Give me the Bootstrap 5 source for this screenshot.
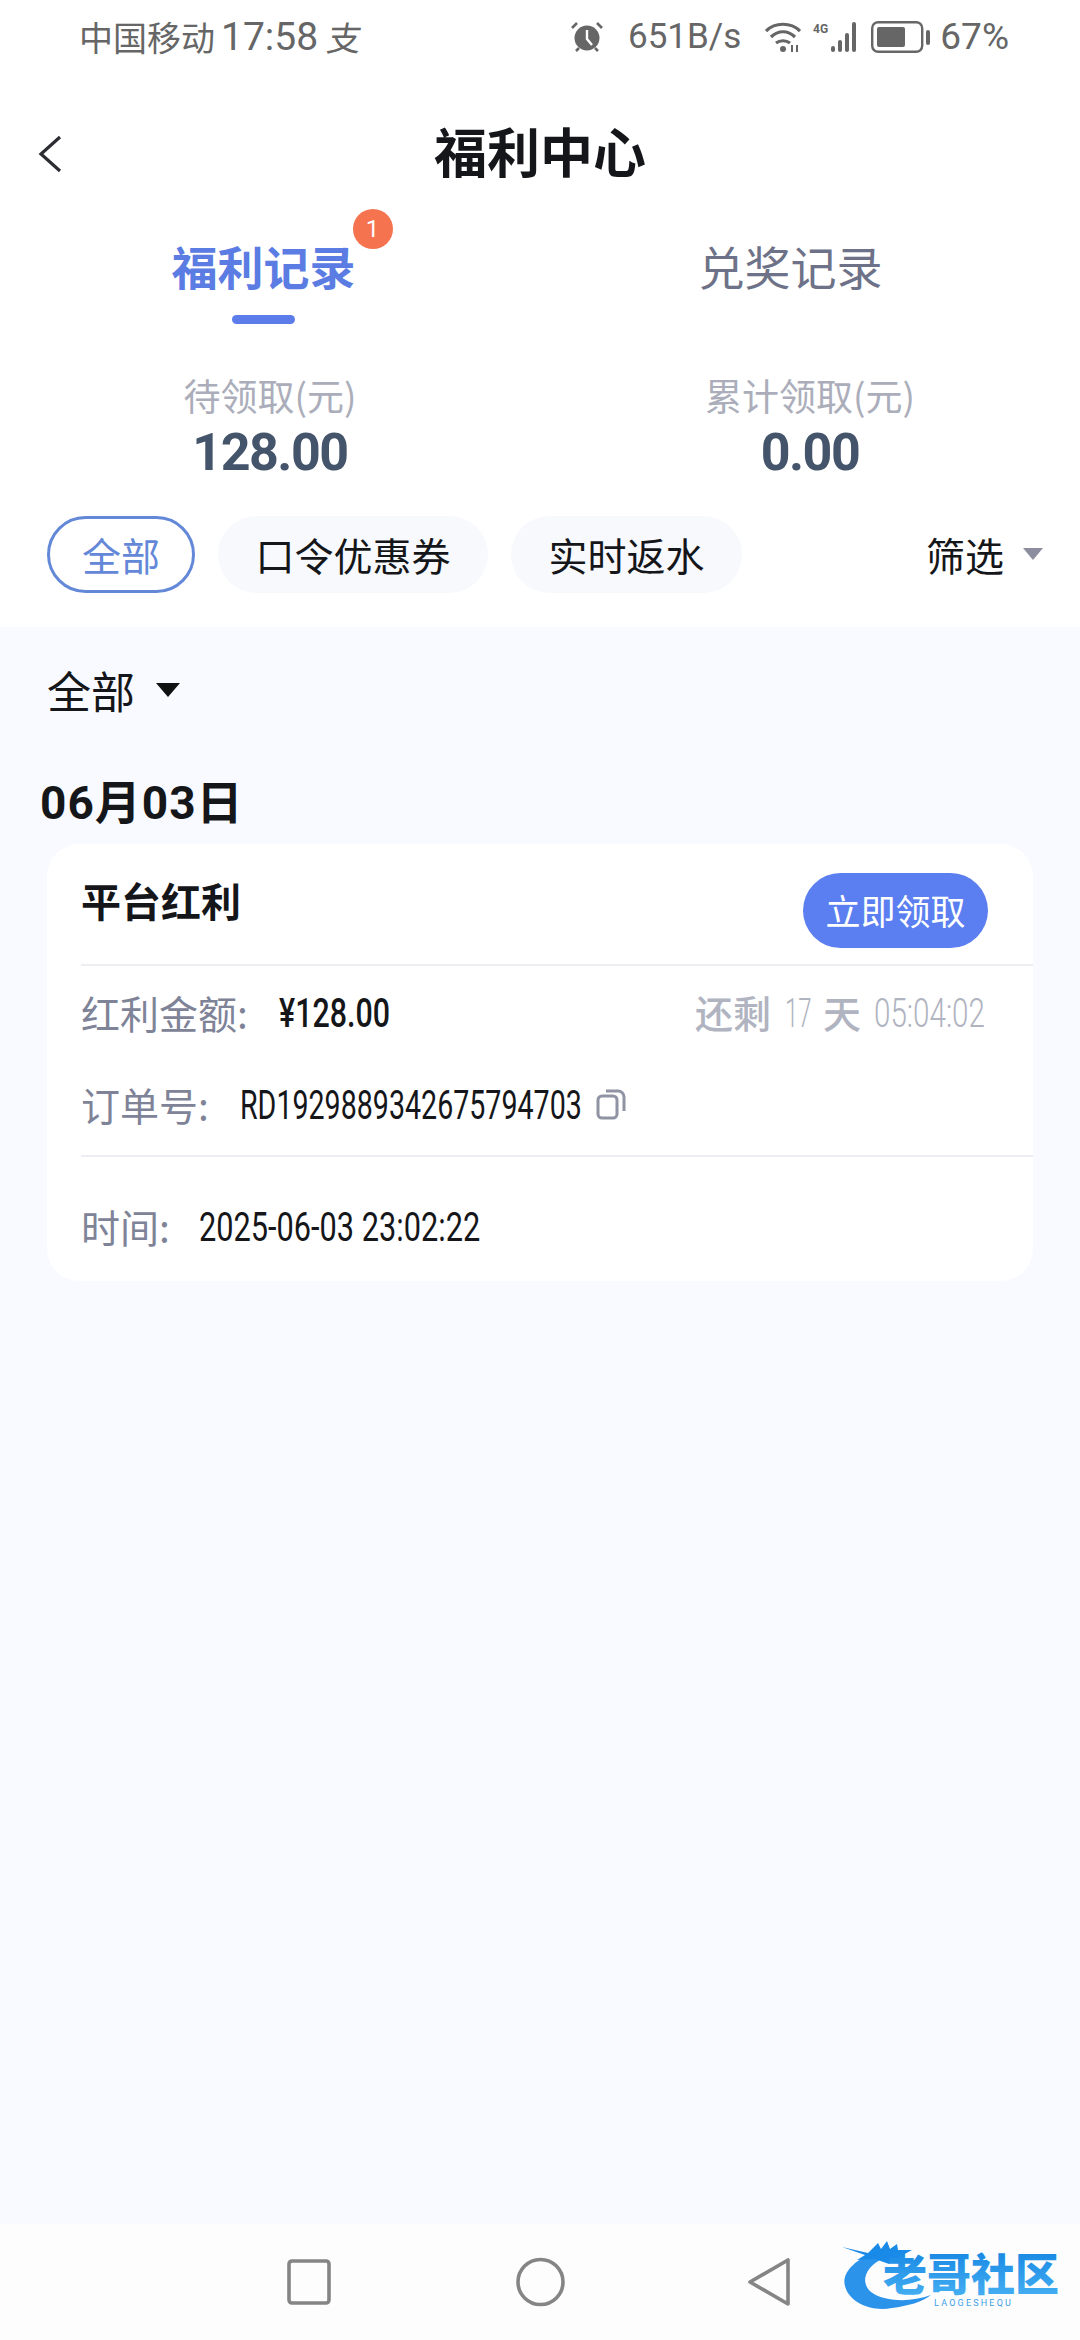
<!DOCTYPE html>
<html lang="zh-CN">
<head>
<meta charset="UTF-8">
<meta name="viewport" content="width=device-width, initial-scale=1.0">
<title>福利中心</title>
<link href="https://cdn.jsdelivr.net/npm/bootstrap@5.3.0/dist/css/bootstrap.min.css" rel="stylesheet">
<style>
    body {
        font-family: "Noto Sans CJK SC", Roboto, sans-serif;
        background: #f8faff;
        color: #151619;
        line-height: 1.2;
    }
    .page-wrap { height: 2340px; width: 1080px; overflow: hidden; }
    .status-bar { height: 74px; padding: 0 71px 0 79px; color: #666; font-size: 34px; }
    .status-time { font-family: Roboto, sans-serif; font-size: 39px; margin-left: 6px; }
    .status-pay { font-size: 34px; margin-left: 10px; transform: skewX(-10deg); }
    .status-num { font-family: Roboto, sans-serif; font-size: 35px; }
    .status-pct { font-size: 37px; margin-left: 9px; }
    .signal-icon { margin-left: 12px; }
    .title-row { height: 155px; padding-bottom: 3px; }
    .title-row h1 { font-size: 53px; font-weight: 700; margin: 0; line-height: 1; }
    .back-btn { left: 37px; top: 61px; }
    .tab-row { padding-right: 26px; height: 109px; }
    .tab-label { font-size: 46px; font-weight: 400; color: #6d7288; line-height: 72px; }
    .tab-label.on { color: #5b7ce2; font-weight: 700; }
    .tab-dot {
        width: 40px; height: 40px; top: -20px; right: -37px;
        background: #f5734f; color: #fff; font: 24px/40px Roboto, sans-serif;
    }
    .tab-bar { width: 63px; height: 9px; background: #5b7ce9; margin: 14px auto 0; }
    .stat-row { margin-top: 30px; }
    .stat-label { font-size: 37px; line-height: 54px; color: #abaeba; }
    .stat-value { font-family: Roboto, sans-serif; font-size: 52px; font-weight: 700; color: #44546a; line-height: 62px; letter-spacing: -1.5px; }
    .pill-row { padding: 0 37px 0 47px; margin-top: 32px; gap: 23px; }
    .chip {
        height: 77px; border-radius: 39px; background: #f7f9fd; font-size: 39px;
        padding: 0 37.5px; display: flex; align-items: center; color: #151619;
    }
    .chip.on { background: #fff; border: 3px solid #6488d8; color: #6488d8; padding: 0 32px; }
    .filter-btn { font-size: 39px; color: #151619; gap: 19px; }
    .tri { width: 0; height: 0; border-style: solid; border-color: transparent; }
    .tri-grey { border-width: 12px 10px 0; border-top-color: #8d8da0; }
    .tri-dark { border-width: 14px 12px 0; border-top-color: #111; }
    .top-panel { height: 627px; }
    .sort-row { height: 126px; padding-left: 47px; font-size: 44px; gap: 21px; }
    .date-head { font-family: Roboto, "Noto Sans CJK SC", sans-serif; font-size: 46px; font-weight: 700; padding-left: 40px; line-height: 48px; margin-top: 26px; letter-spacing: 1px; }
    .gift-card {
        margin: 17px 47px 0; height: 437px; background: #fff; border-radius: 32px;
        padding-left: 34px;
    }
    .gift-top { height: 122px; padding-right: 45px; border-bottom: 2px solid #eceef1; }
    .gift-top strong { font-size: 40px; font-weight: 700; margin-top: -8px; }
    .claim-btn {
        width: 185px; height: 75px; background: #5b7ff0; color: #fff; border: 0;
        border-radius: 38px; font-size: 35px; padding: 0; margin-top: 12px;
    }
    .gift-line { font-size: 39px; color: #7e8397; }
    .gift-line > span { flex-shrink: 0; }
    .lbl-amount { width: 198px; }
    .lbl-order { width: 159px; }
    .lbl-time { width: 118px; }
    /* the numbers are a condensed face in the picture, squeeze Roboto to match */
    .num-text {
        font-family: Roboto, sans-serif; font-size: 40px; color: #151619; white-space: nowrap;
        transform-origin: left center; margin-top: 3px;
    }
    .num-amount { width: 108px; transform: scaleX(.76); font-weight: 500; }
    .num-order { width: 341px; transform: scaleX(.715); }
    .num-time { width: 281px; transform: scaleX(.768); }
    .num-left { width: 24px; transform: scaleX(.6); color: #b0b3c0; margin-left: 14px; font-weight: 300; }
    .num-clock { width: 114px; transform: scaleX(.74); color: #b0b3c0; margin-left: 13px; font-weight: 300; }
    .amount-line { height: 92px; padding-right: 45px; }
    .order-line { height: 92px; }
    .order-block { height: 191px; border-bottom: 2px solid #eceef1; }
    .left-text { color: #b0b3c0; font-size: 38px; font-weight: 500; }
    .left-day { margin-left: 14px; }
    .copy-icon { margin-left: 15px; }
    .time-line { height: 122px; padding-top: 16px; }
    .nav-foot { height: 116px; background: #fdfdfe; padding-left: 287px; margin-top: auto; }
    .logo-mark { right: 18px; bottom: 28px; }
</style>
</head>
<body>
<div class="page-wrap d-flex flex-column position-relative">
    <div class="top-panel bg-white">
        <div class="status-bar d-flex align-items-center">
            <span>中国移动</span><span class="status-time">17:58</span>
            <span class="status-pay">支</span>
            <!-- alarm -->
            <svg class="ms-auto" width="34" height="32" viewBox="0 0 34 32"><circle cx="17" cy="17" r="12.5" fill="#666"/><path d="M17 9v9l5 6" stroke="#fff" stroke-width="2.4" fill="none"/><path d="M2 7l5-5M32 7l-5-5M6 30l3-3M28 30l-3-3" stroke="#666" stroke-width="2.6"/></svg>
            <span class="status-num ms-4">651B/s</span>
            <!-- wifi -->
            <svg class="ms-4" width="36" height="32" viewBox="0 0 36 32"><path d="M1 10C10 1 26 1 35 10M6 16C13 9 23 9 30 16M11 22c4-3 10-3 14 0" stroke="#666" stroke-width="3.2" fill="none"/><circle cx="18" cy="28" r="3" fill="#666"/><path d="M27 24v7M32 24v7" stroke="#666" stroke-width="2"/></svg>
            <!-- 4G + signal -->
            <svg class="signal-icon" width="50" height="32" viewBox="0 0 50 32"><text x="0" y="12" font-family="Roboto, sans-serif" font-size="12" font-weight="700" fill="#666">4G</text><g fill="#666"><rect x="18" y="25" width="4" height="6" rx="2"/><rect x="25" y="19" width="4" height="12" rx="2"/><rect x="32" y="12" width="4" height="19" rx="2"/><rect x="39" y="1" width="4" height="30" rx="2"/></g></svg>
            <!-- battery -->
            <svg class="ms-2" width="60" height="32" viewBox="0 0 60 32"><rect x="1.2" y="1.2" width="50" height="29.6" rx="6" fill="none" stroke="#666" stroke-width="2.4"/><rect x="6" y="6" width="28" height="20" rx="2" fill="#666"/><rect x="55" y="9" width="4" height="15" rx="2" fill="#666"/></svg>
            <span class="status-num status-pct">67%</span>
        </div>

        <div class="title-row d-flex align-items-center justify-content-center position-relative">
            <svg class="back-btn position-absolute" width="26" height="38" viewBox="0 0 26 38"><path d="M23 2L4 19l19 17" fill="none" stroke="#2b2d33" stroke-width="3.2"/></svg>
            <h1>福利中心</h1>
        </div>

        <div class="row g-0 tab-row">
            <div class="col-6 text-center">
                <span class="tab-label on d-inline-block position-relative">福利记录<span class="tab-dot position-absolute rounded-circle">1</span></span>
                <div class="tab-bar rounded-pill"></div>
            </div>
            <div class="col-6 text-center">
                <span class="tab-label d-inline-block">兑奖记录</span>
            </div>
        </div>

        <div class="row g-0 stat-row text-center">
            <div class="col-6">
                <div class="stat-label">待领取(元)</div>
                <div class="stat-value">128.00</div>
            </div>
            <div class="col-6">
                <div class="stat-label">累计领取(元)</div>
                <div class="stat-value">0.00</div>
            </div>
        </div>

        <div class="pill-row d-flex align-items-center">
            <span class="chip on">全部</span>
            <span class="chip">口令优惠券</span>
            <span class="chip">实时返水</span>
            <span class="filter-btn d-flex align-items-center ms-auto">筛选<span class="tri tri-grey"></span></span>
        </div>
    </div>

    <div class="sort-row d-flex align-items-center">全部<span class="tri tri-dark"></span></div>
    <div class="date-head">06月03日</div>

    <div class="gift-card">
        <div class="gift-top d-flex align-items-center justify-content-between">
            <strong>平台红利</strong>
            <button type="button" class="claim-btn">立即领取</button>
        </div>
        <div class="order-block">
            <div class="amount-line gift-line d-flex align-items-center">
                <span class="lbl-amount">红利金额:</span>
                <span class="num-text num-amount">¥128.00</span>
                <span class="left-text ms-auto">还剩</span>
                <span class="num-text num-left">17</span>
                <span class="left-text left-day">天</span>
                <span class="num-text num-clock">05:04:02</span>
            </div>
            <div class="order-line gift-line d-flex align-items-center">
                <span class="lbl-order">订单号:</span>
                <span class="num-text num-order">RD1929889342675794703</span>
                <svg class="copy-icon" width="30" height="32" viewBox="0 0 30 32"><rect x="2" y="8" width="19" height="22" rx="4" fill="none" stroke="#8f93a3" stroke-width="3"/><path d="M10 3h12a6 6 0 0 1 6 6v14" fill="none" stroke="#8f93a3" stroke-width="3"/></svg>
            </div>
        </div>
        <div class="time-line gift-line d-flex align-items-center">
            <span class="lbl-time">时间:</span>
            <span class="num-text num-time">2025-06-03 23:02:22</span>
        </div>
    </div>

    <div class="nav-foot d-flex align-items-center">
        <svg width="44" height="46" viewBox="0 0 44 46"><rect x="2" y="2" width="40" height="42" rx="3" fill="none" stroke="#858585" stroke-width="3.6"/></svg>
        <svg style="margin-left:185px" width="49" height="50" viewBox="0 0 49 50"><circle cx="24.5" cy="25" r="22.5" fill="none" stroke="#858585" stroke-width="3.6"/></svg>
        <svg style="margin-left:182px" width="44" height="50" viewBox="0 0 44 50"><path d="M41 3v44L3 25z" fill="none" stroke="#858585" stroke-width="3.6" stroke-linejoin="round"/></svg>
    </div>

    <!-- watermark logo over the nav bar -->
    <svg class="logo-mark position-absolute" width="222" height="72" viewBox="0 0 222 72">
        <defs><linearGradient id="lg" x1="0" y1="0" x2="0" y2="1"><stop offset="0" stop-color="#0d7fe0"/><stop offset="1" stop-color="#4db5f5"/></linearGradient></defs>
        <path d="M32 14C10 22 2 36 5 46c4 16 25 26 47 22 16-2 30-6 39-13-19 7-43 7-57-1-14-8-12-26 10-36z" fill="#2b93ea"/>
        <path d="M2 7l26 6 10-10 3 6 6-8 3 8 7-5 1 6 14 0-11 6 6 3-12 1-6 4-14-5-18 1 8-5z" fill="#1a8ae8"/>
        <text x="43" y="51" font-family="Noto Sans CJK SC, sans-serif" font-size="44" font-weight="900" fill="url(#lg)">老哥社区</text>
        <text x="94" y="66" font-family="Roboto, sans-serif" font-size="9" letter-spacing="2.2" fill="#3c9fe8">LAOGESHEQU</text>
    </svg>
</div>
<script src="https://cdn.jsdelivr.net/npm/bootstrap@5.3.0/dist/js/bootstrap.bundle.min.js"></script>
</body>
</html>
